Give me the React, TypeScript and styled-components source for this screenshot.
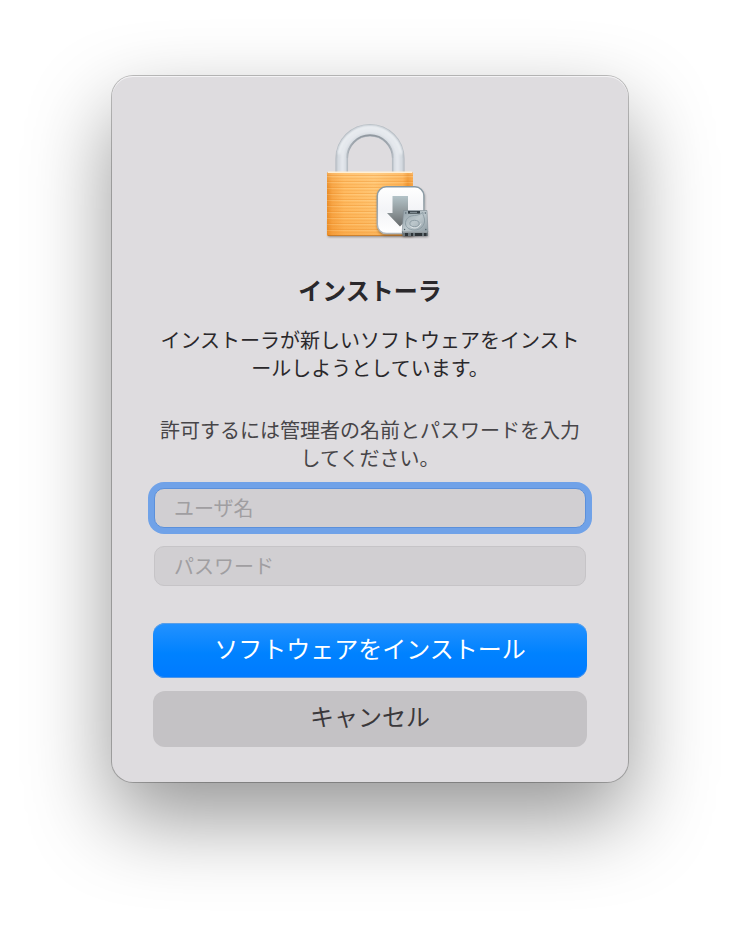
import React from "react";
import styled, { createGlobalStyle, css } from "styled-components";

const GlobalStyle = createGlobalStyle`
  *, *::before, *::after { box-sizing: border-box; }
  body {
    margin: 0;
    background: #fff;
    font-family: "Noto Sans CJK JP", sans-serif;
    -webkit-font-smoothing: antialiased;
  }
`;

const Page = styled.main`
  display: flex;
  justify-content: center;
  align-items: flex-start;
  min-height: 100vh;
  padding: 76px 16px 120px;
  overflow: hidden;
`;

const Dialog = styled.form`
  display: flex;
  flex-direction: column;
  width: 100%;
  max-width: 516px;
  padding: 44px 41px 35px;
  border-radius: 21px;
  background: #dedcdf;
  box-shadow:
    inset 0 1px 0 #f4f3f5,
    0 0 0 1px rgba(0, 0, 0, 0.24),
    0 36px 84px rgba(0, 0, 0, 0.42);
`;

const IconFrame = styled.div`
  display: flex;
  justify-content: center;

  svg {
    display: block;
    overflow: visible;
  }
`;

const Title = styled.h1`
  margin: 26px 0 20px;
  font-size: 24px;
  font-weight: 700;
  line-height: 32px;
  text-align: center;
  color: #2a282b;
`;

const Message = styled.p<{ $secondary?: boolean }>`
  margin: ${(p) => (p.$secondary ? "34px 0 16px" : "0")};
  font-size: 20px;
  line-height: 28px;
  text-align: center;
  line-break: anywhere;
  color: ${(p) => (p.$secondary ? "#474548" : "#2a282b")};
`;

const Fields = styled.div`
  display: flex;
  flex-direction: column;
  gap: 18px;
  padding: 0 1px;
`;

const Field = styled.input<{ $active?: boolean }>`
  width: 100%;
  height: 40px;
  padding: 0 19px 2px;
  border: 1px solid #c6c4c7;
  border-radius: 10px;
  outline: none;
  background: #d1cfd2;
  color: #2a282b;
  font-family: inherit;
  font-size: 20px;

  &::placeholder {
    color: #a09ea1;
    opacity: 1;
  }

  ${(p) =>
    p.$active &&
    css`
      border-color: #5b90db;
      box-shadow: 0 0 0 6px #70a2e8;
    `}
`;

const Actions = styled.div`
  display: flex;
  flex-direction: column;
  gap: 13px;
  margin-top: 37px;
`;

const Button = styled.button<{ $primary?: boolean }>`
  height: 56px;
  padding: 0 16px 6px;
  border: 0;
  border-radius: 12px;
  background: #c4c2c5;
  color: #3a383b;
  font-family: inherit;
  font-size: 24px;
  line-height: 32px;

  ${(p) =>
    p.$primary &&
    css`
      height: 55px;
      background: linear-gradient(#2492ff, #0082ff 55%, #007aff);
      box-shadow: inset 0 1px 0 #5a9fe8, inset 0 -1px 0 #4b94ea;
      color: #fff;
    `}
`;

const SHACKLE = "M35.75 56V38.5a28.25 28.25 0 0 1 56.5 0V56";

function LockIcon() {
  return (
    <svg width="128" height="128" viewBox="0 0 128 128" aria-hidden="true">
      <defs>
        <linearGradient id="brass" x1="0" x2="1" y1="0" y2="0">
          <stop offset="0" stopColor="#e88b27" />
          <stop offset="0.06" stopColor="#f7a445" />
          <stop offset="0.2" stopColor="#ffb95f" />
          <stop offset="0.55" stopColor="#ffc573" />
          <stop offset="0.88" stopColor="#fdb054" />
          <stop offset="0.94" stopColor="#ee9029" />
          <stop offset="1" stopColor="#f8a548" />
        </linearGradient>
        <linearGradient id="brassShade" x1="0" x2="0" y1="0" y2="1">
          <stop offset="0" stopColor="#ffe0ac" stopOpacity="0.35" />
          <stop offset="0.3" stopColor="#ffb04a" stopOpacity="0" />
          <stop offset="1" stopColor="#f08a1e" stopOpacity="0.3" />
        </linearGradient>
        <pattern id="grain" width="86" height="6" patternUnits="userSpaceOnUse">
          <rect width="86" height="1" y="1" fill="#e98a22" opacity="0.32" />
          <rect width="86" height="1" y="4" fill="#f09a35" opacity="0.26" />
          <rect width="86" height="1" y="2" fill="#ffe0a8" opacity="0.24" />
        </pattern>
        <linearGradient id="innerShade" x1="0" x2="0" y1="0" y2="1">
          <stop offset="0" stopColor="#7e868e" stopOpacity="0.75" />
          <stop offset="1" stopColor="#7e868e" stopOpacity="0.1" />
        </linearGradient>
        <linearGradient id="tile" x1="0" x2="0" y1="0" y2="1">
          <stop offset="0" stopColor="#ffffff" />
          <stop offset="0.5" stopColor="#f3f4f7" />
          <stop offset="1" stopColor="#ffffff" />
        </linearGradient>
        <linearGradient id="tileEdge" x1="0" x2="0" y1="0" y2="1">
          <stop offset="0" stopColor="#8698a2" />
          <stop offset="1" stopColor="#b0b6ba" />
        </linearGradient>
        <linearGradient id="arrow" x1="0" x2="0" y1="0" y2="1">
          <stop offset="0" stopColor="#b3c3c8" />
          <stop offset="0.5" stopColor="#90999c" />
          <stop offset="1" stopColor="#666a6c" />
        </linearGradient>
        <linearGradient id="plate" x1="0" x2="1" y1="0" y2="1">
          <stop offset="0" stopColor="#93a1a8" />
          <stop offset="0.5" stopColor="#bcc7cc" />
          <stop offset="1" stopColor="#8f9ca3" />
        </linearGradient>
        <filter id="soft" x="-20%" y="-20%" width="140%" height="140%">
          <feGaussianBlur stdDeviation="1.4" />
        </filter>
        <filter id="drop" x="-20%" y="-20%" width="140%" height="150%">
          <feGaussianBlur stdDeviation="1.2" />
        </filter>
      </defs>

      <rect x="22" y="100" width="85" height="17" fill="#4b3a2b" opacity="0.5" filter="url(#drop)" />

      <g fill="none">
        <path d={SHACKLE} stroke="#b0b7be" strokeWidth="12.6" />
        <path d={SHACKLE} stroke="#c3cad1" strokeWidth="11" />
        <path d={SHACKLE} stroke="#d3d9df" strokeWidth="8.5" />
        <path d="M36.5 54V38.5a27.5 27.5 0 0 1 55 0V54" stroke="#e7eaef" strokeWidth="4" filter="url(#soft)" />
        <path d="M33 34a31.4 31.4 0 0 1 62 0" stroke="#f0f3f6" strokeWidth="3" filter="url(#soft)" />
        <path d="M41.2 38a22.800 22.800 0 0 1 45.600 0" stroke="url(#innerShade)" strokeWidth="1.8" />
      </g>

      <rect x="21" y="52" width="86" height="64" rx="1.5" fill="url(#brass)" />
      <rect x="21" y="52" width="86" height="64" rx="1.5" fill="url(#brassShade)" />
      <rect x="21" y="53" width="86" height="62" fill="url(#grain)" />
      <rect x="22" y="51.5" width="84" height="1.5" fill="#fff0d6" />
      <rect x="22" y="115" width="84" height="1" fill="#b96f20" opacity="0.7" />

      <rect x="71" y="68" width="48" height="48" rx="9" fill="#2d2a26" opacity="0.35" filter="url(#drop)" />
      <rect x="71.3" y="66.8" width="46.6" height="46.8" rx="9" fill="url(#tile)" stroke="url(#tileEdge)" strokeWidth="1.5" />
      <path d="M86.5 76H102V93h5L94 106.500 81 93h5.500Z" fill="url(#arrow)" />

      <rect x="97" y="112" width="25" height="5" fill="#25282a" opacity="0.5" filter="url(#drop)" />
      <path d="M97.500 90.500H121L122 112H96.200Z" fill="url(#plate)" stroke="#7f8c93" strokeWidth="0.6" />
      <path d="M96 111.500H122V116H96.500Z" fill="#6b757a" />
      <path d="M97 112H121.500" stroke="#cbd3d7" strokeWidth="0.8" />
      <path d="M99 113h3v3h-3ZM105 113h2v3h-2ZM109 113h7v3h-7ZM118 113h2.500v3H118Z" fill="#2e3438" />
      <rect x="102" y="91" width="12" height="2.700" fill="#354047" />
      <path d="M104 92.300h7" stroke="#aab7bd" strokeWidth="0.8" />
      <g fill="none" stroke="#8a9aa2" strokeWidth="0.9">
        <path d="M117 92.500c-.7 3 2.300 5 1.500 9.500-1 5-5 8-10 8-6 0-9.500-3.500-9-7.500.5-4.500 4.500-7 9-7 3.500 0 5.500-1.500 8.500-3Z" />
        <ellipse cx="108.500" cy="103.500" rx="4.600" ry="3.200" />
        <path d="M104.500 106.500c4 3 9 1 10.500-3" stroke="#e4eaed" />
      </g>
      <g fill="#4f5f68">
        <circle cx="99.800" cy="93" r="0.700" />
        <circle cx="119.300" cy="93" r="0.700" />
        <circle cx="98.600" cy="109.500" r="0.700" />
        <circle cx="119.800" cy="109.500" r="0.700" />
      </g>
    </svg>
  );
}

export default function App() {
  return (
    <>
      <GlobalStyle />
      <Page lang="ja">
        <Dialog
          role="dialog"
          aria-labelledby="dialog-title"
          onSubmit={(event: React.FormEvent) => event.preventDefault()}
        >
          <IconFrame>
            <LockIcon />
          </IconFrame>
          <Title id="dialog-title">インストーラ</Title>
          <Message>インストーラが新しいソフトウェアをインストールしようとしています。</Message>
          <Message $secondary>許可するには管理者の名前とパスワードを入力してください。</Message>
          <Fields>
            <Field $active type="text" aria-label="ユーザ名" placeholder="ユーザ名" autoComplete="username" />
            <Field type="password" aria-label="パスワード" placeholder="パスワード" autoComplete="current-password" />
          </Fields>
          <Actions>
            <Button $primary type="submit">ソフトウェアをインストール</Button>
            <Button type="button">キャンセル</Button>
          </Actions>
        </Dialog>
      </Page>
    </>
  );
}
